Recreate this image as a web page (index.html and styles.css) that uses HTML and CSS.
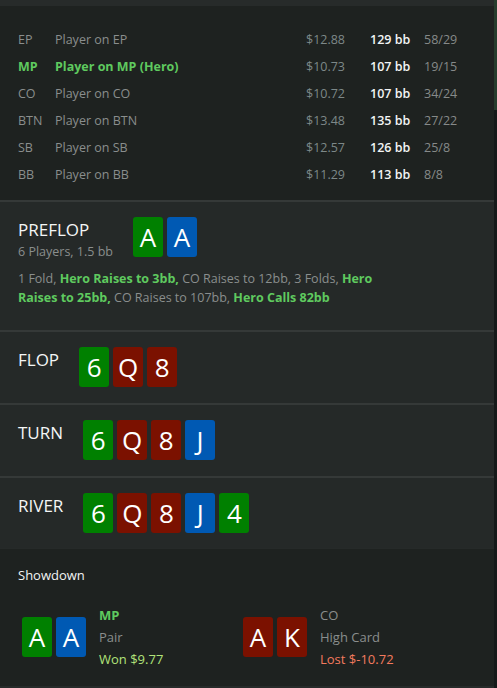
FILE: index.html
```html
<!DOCTYPE html>
<html>
<head>
<meta charset="utf-8">
<link rel="stylesheet" href="styles.css">
</head>
<body>
<div class="page">
  <div class="main">
    <div class="topbar"></div>
    <div class="players">
      <div class="prow"><span class="pos">EP</span><span class="name">Player on EP</span><span class="usd">$12.88</span><span class="bb">129 bb</span><span class="ratio">58/29</span></div>
      <div class="prow hero"><span class="pos">MP</span><span class="name">Player on MP (Hero)</span><span class="usd">$10.73</span><span class="bb">107 bb</span><span class="ratio">19/15</span></div>
      <div class="prow"><span class="pos">CO</span><span class="name">Player on CO</span><span class="usd">$10.72</span><span class="bb">107 bb</span><span class="ratio">34/24</span></div>
      <div class="prow"><span class="pos">BTN</span><span class="name">Player on BTN</span><span class="usd">$13.48</span><span class="bb">135 bb</span><span class="ratio">27/22</span></div>
      <div class="prow"><span class="pos">SB</span><span class="name">Player on SB</span><span class="usd">$12.57</span><span class="bb">126 bb</span><span class="ratio">25/8</span></div>
      <div class="prow"><span class="pos">BB</span><span class="name">Player on BB</span><span class="usd">$11.29</span><span class="bb">113 bb</span><span class="ratio">8/8</span></div>
    </div>

    <div class="street pre">
      <div class="street-head">
        <div class="label">
          <div class="title">PREFLOP</div>
          <div class="sub">6 Players, 1.5 bb</div>
        </div>
        <div class="cards"><span class="card g">A</span><span class="card b">A</span></div>
      </div>
      <p class="actions"><span>1 Fold, </span><b>Hero Raises to 3bb,</b><span> CO Raises to 12bb, 3 Folds, </span><b>Hero Raises to 25bb,</b><span> CO Raises to 107bb, </span><b>Hero Calls 82bb</b></p>
    </div>

    <div class="street">
      <div class="street-head">
        <div class="label"><div class="title">FLOP</div></div>
        <div class="cards"><span class="card g">6</span><span class="card r">Q</span><span class="card r">8</span></div>
      </div>
    </div>

    <div class="street">
      <div class="street-head">
        <div class="label"><div class="title">TURN</div></div>
        <div class="cards"><span class="card g">6</span><span class="card r">Q</span><span class="card r">8</span><span class="card b">J</span></div>
      </div>
    </div>

    <div class="street last">
      <div class="street-head">
        <div class="label"><div class="title">RIVER</div></div>
        <div class="cards"><span class="card g">6</span><span class="card r">Q</span><span class="card r">8</span><span class="card b">J</span><span class="card g">4</span></div>
      </div>
    </div>

    <div class="showdown">
      <div class="sd-title">Showdown</div>
      <div class="sd-grid">
        <div class="sd-player">
          <div class="cards"><span class="card g">A</span><span class="card b">A</span></div>
          <div class="sd-info">
            <div class="sd-pos hero-pos">MP</div>
            <div class="sd-hand">Pair</div>
            <div class="won">Won $9.77</div>
          </div>
        </div>
        <div class="sd-player">
          <div class="cards"><span class="card r">A</span><span class="card r">K</span></div>
          <div class="sd-info">
            <div class="sd-pos">CO</div>
            <div class="sd-hand">High Card</div>
            <div class="lost">Lost $-10.72</div>
          </div>
        </div>
      </div>
    </div>
  </div>
  <div class="scroll"><div class="thumb"></div></div>
</div>
</body>
</html>
```

FILE: styles.css
```css
* { box-sizing: border-box; }
html, body { margin: 0; padding: 0; }
body {
  background: #1e2220;
  font-family: "Open Sans", "Noto Sans", sans-serif;
  color: #8b8f8e;
  width: 497px;
  height: 688px;
  overflow: hidden;
}
.page {
  display: flex;
  height: 688px;
}
.main {
  width: 494px;
  display: flex;
  flex-direction: column;
  background: #1e2220;
  border-bottom: 2px solid #272b2a;
}
.scroll {
  width: 3px;
  background: #151919;
}
.thumb {
  height: 110px;
  background: #263d2d;
}
.topbar {
  height: 6px;
  background: #272b2a;
}
.players {
  padding: 20px 0 12px 18px;
}
.prow {
  display: flex;
  height: 27px;
  align-items: center;
  font-size: 12.5px;
  color: #8a8e8d;
}
.pos { width: 37px; }
.name { width: 251px; }
.usd { width: 64px; color: #7d8888; }
.bb { width: 54px; color: #f2f4f4; font-weight: 600; }
.ratio { color: #868a89; }
.prow.hero .pos, .prow.hero .name { color: #5fca5f; font-weight: 700; }

.street {
  background: #252928;
  border-top: 2px solid #353938;
  padding: 15px 18px 16px 18px;
}
.street.pre { padding-bottom: 15px; }
.street.last { padding-bottom: 15px; }
.street-head {
  display: flex;
  gap: 20px;
  align-items: flex-start;
}
.title {
  font-size: 17px;
  color: #f4f6f6;
  line-height: 23px;
  margin-top: 1px;
}
.sub {
  font-size: 12.5px;
  color: #8a8e8d;
  line-height: 18px;
  margin-top: 2px;
}
.cards {
  display: flex;
  gap: 4px;
}
.card {
  width: 30px;
  height: 40px;
  border-radius: 3px;
  color: #ffffff;
  font-size: 26px;
  line-height: 40px;
  text-align: center;
  font-family: "Open Sans", "Noto Sans", sans-serif;
}
.card.g { background: #008000; }
.card.r { background: #7b1100; }
.card.b { background: #0059b3; }
.actions {
  margin: 8px 0 8px 0;
  max-width: 372px;
  font-size: 12.5px;
  line-height: 19px;
  color: #8a8e8d;
}
.actions b { color: #5fca5f; font-weight: 700; }

.showdown {
  flex: 1;
  background: #1e2220;
  border-top: 1px solid #262a29;
  padding: 16px 18px 0 18px;
}
.sd-title {
  font-size: 13px;
  color: #f2f4f4;
  line-height: 20px;
}
.sd-grid {
  display: grid;
  grid-template-columns: 221px 221px;
  padding: 19px 0 0 4px;
}
.sd-player {
  display: flex;
  align-items: center;
  gap: 13px;
}
.sd-info {
  font-size: 13px;
  line-height: 22px;
}
.sd-pos { color: #8a8e8d; }
.hero-pos { color: #5fca5f; font-weight: 700; }
.sd-hand { color: #8a8e8d; }
.won { color: #b2e47a; }
.lost { color: #f27a5e; }
```
